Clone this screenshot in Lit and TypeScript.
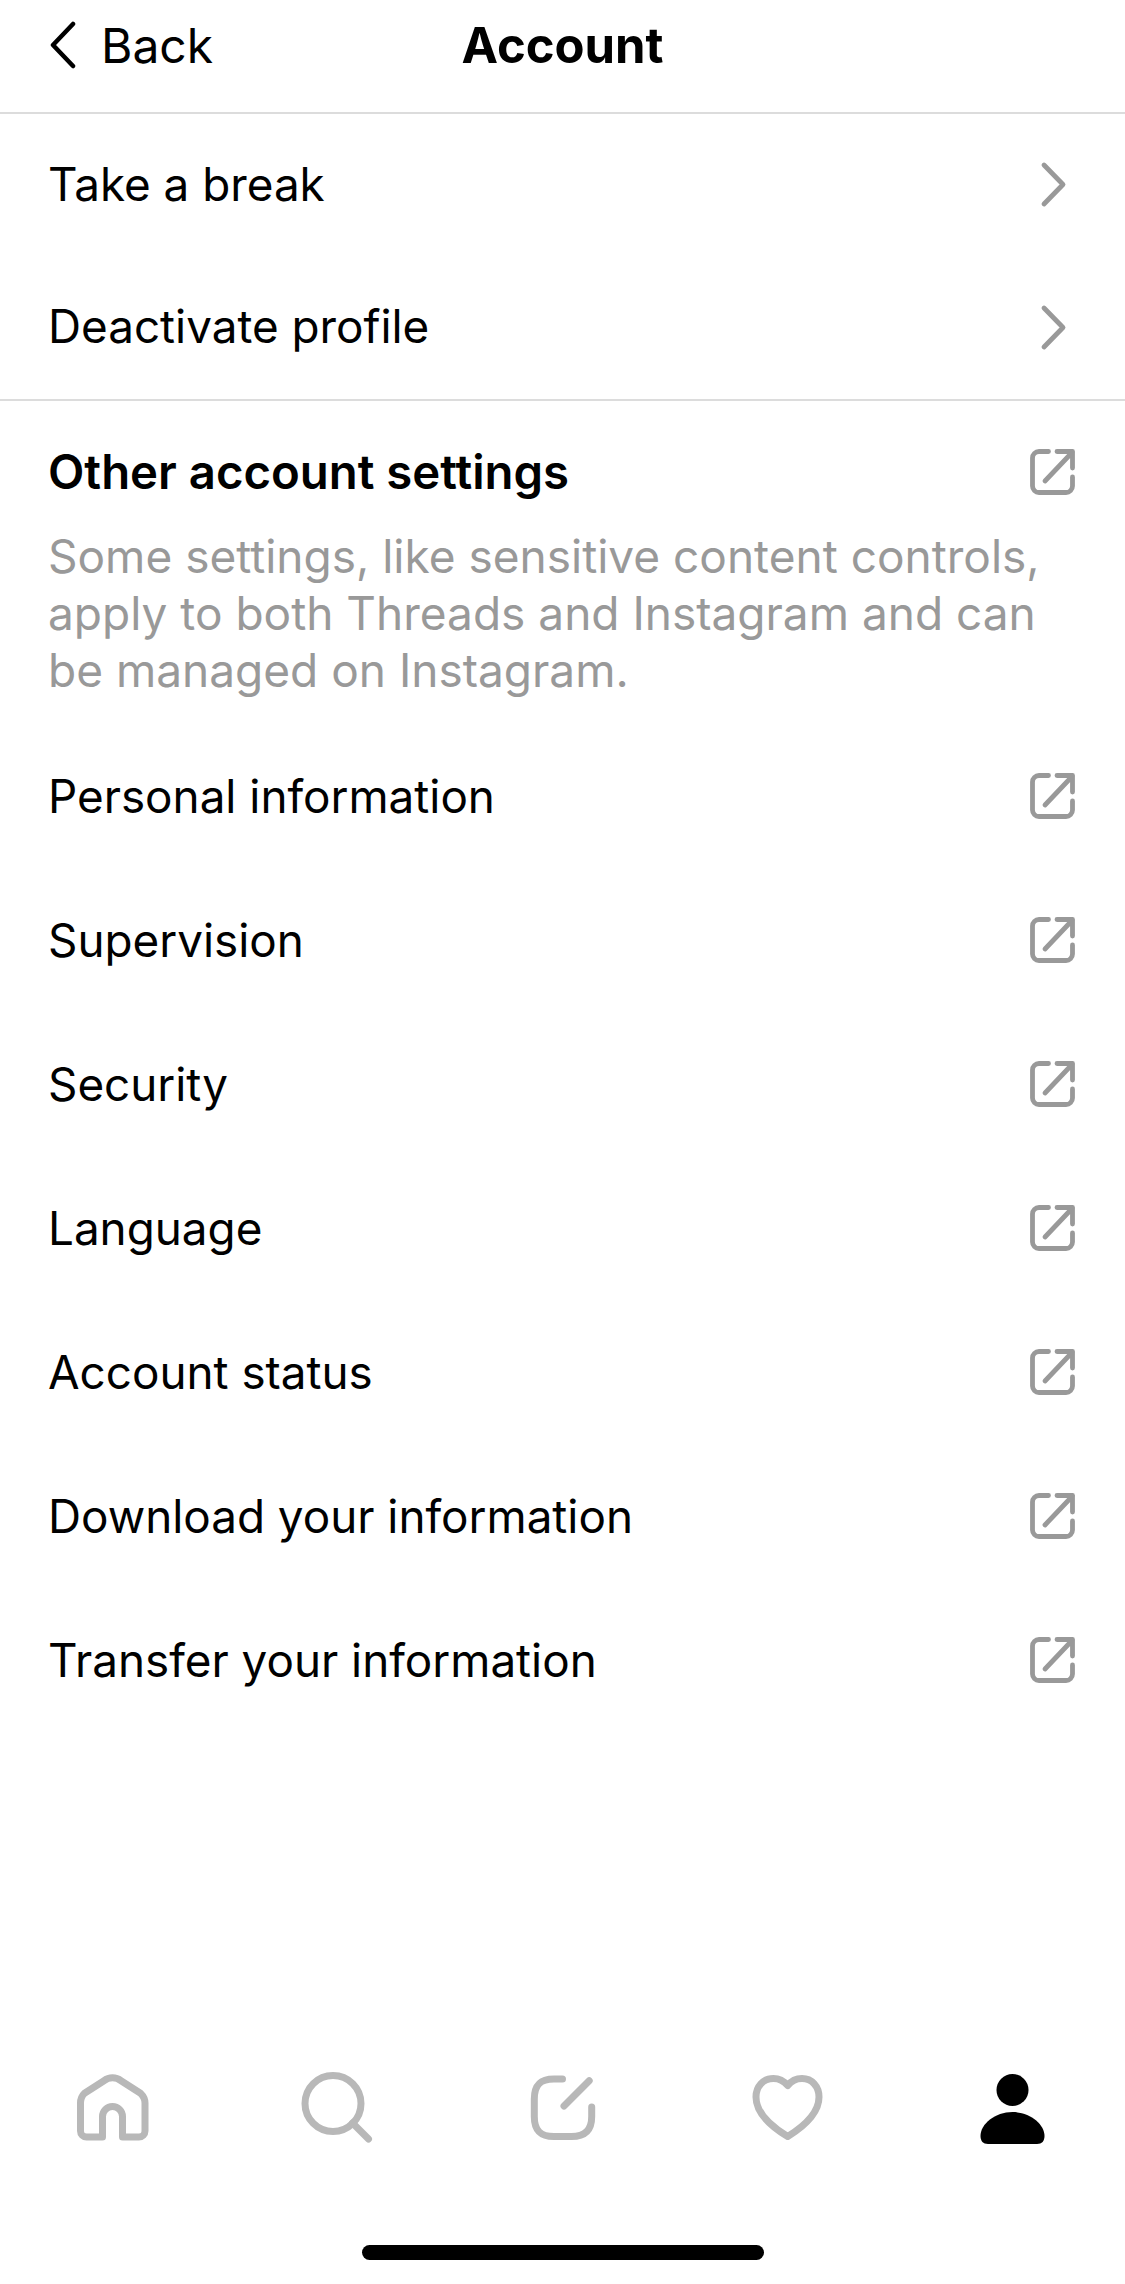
import { LitElement, html, css, svg } from 'lit';
import { customElement } from 'lit/decorators.js';

const externalIcon = html`<svg class="row-icon" width="48" height="48" viewBox="0 0 48 48" fill="none" stroke="#999" stroke-width="4.8" stroke-linecap="round" stroke-linejoin="round">
  <path d="M19.5 3.5H10a6.5 6.5 0 0 0 -6.5 6.5V38a6.5 6.5 0 0 0 6.5 6.5H37a6.5 6.5 0 0 0 6.5 -6.5V29" />
  <path d="M16 33L43.5 4M28 3.5H43.5V20" />
</svg>`;

const chevronIcon = html`<svg class="row-icon" width="48" height="48" viewBox="0 0 48 48" fill="none" stroke="#999" stroke-width="4.8" stroke-linecap="round" stroke-linejoin="round">
  <path d="M15 5 L34 24.5 L15 44" />
</svg>`;

const navIcons = [
  svg`<path d="M29.5 46.5a10 10 0 0 1 20 0V67H66a6 6 0 0 0 6-6V33c0-4-1.6-7-4.5-9.8L48 10.7c-5-4-12-4-17 0L11.5 23.2C8.6 26 7.5 29 7.5 33V61a6 6 0 0 0 6 6H29.5Z" />`,
  svg`<circle cx="35" cy="33.5" r="28" /><path d="M54.5 53 L70.5 69" />`,
  svg`<path d="M39.5 9H31C17 9 11.3 15 11.3 29V46.5C11.3 60 17 66.5 31 66.5H48.5C62 66.5 68.7 60 68.7 46.5V37M41 36L66.2 10.7" />`,
  svg`<path d="M39.7 15.5C35 10 30 8.5 25.5 8.5C15 8.5 8 16.5 8 27C8 43 24 57 39.7 66.5C55 57 71 43 71 27C71 16.5 64 8.5 54 8.5C49 8.5 44 10 39.7 15.5Z" />`,
  svg`<circle cx="39.5" cy="20" r="16" fill="#000" stroke="none" /><path fill="#000" stroke="none" d="M39.5 42C22 42 7.5 54 7.5 66C7.5 71 10 74 15 74H64C69 74 71.5 71 71.5 66C71.5 54 57 42 39.5 42Z" />`,
];

const outerLinks = [
  'Personal information',
  'Supervision',
  'Security',
  'Language',
  'Account status',
  'Download your information',
  'Transfer your information',
];

@customElement('app-root')
export class AppRoot extends LitElement {
  static styles = css`
    :host {
      display: flex;
      flex-direction: column;
      height: 2284px;
      background: #fff;
      color: #000;
      font-family: 'Inter', 'Liberation Sans', sans-serif;
      font-size: 45.8px;
    }

    .header {
      display: grid;
      grid-template-columns: 1fr auto 1fr;
      align-items: center;
      height: 114px;
      box-sizing: border-box;
      padding: 0 48px 22px;
      border-bottom: 2px solid #dcdcdc;
      font-size: 48px;
    }

    .back {
      display: flex;
      align-items: center;
      gap: 25px;
    }

    .title {
      font-weight: 700;
      font-size: 49px;
    }

    .section {
      border-bottom: 2px solid #dcdcdc;
    }

    .row {
      display: flex;
      align-items: center;
      justify-content: space-between;
      height: 144px;
      box-sizing: border-box;
      padding: 0 48px 2px;
    }

    .section .row:first-child {
      height: 142px;
    }

    .section .row:last-child {
      height: 143px;
    }

    .section + .row {
      height: 143px;
    }

    .row-icon {
      display: block;
    }

    .heading {
      font-weight: 600;
      font-size: 47.3px;
    }

    .note {
      margin: -16px 0 26px;
      padding: 0 48px;
      color: #999;
      line-height: 57px;
      font-size: 46px;
    }

    .nav {
      display: grid;
      grid-template-columns: repeat(5, 225px);
      margin-top: auto;
    }

    .nav-item {
      display: flex;
      justify-content: center;
    }

    .nav-item svg {
      fill: none;
      stroke: #b8b8b8;
      stroke-width: 7;
      stroke-linecap: round;
      stroke-linejoin: round;
    }

    .indicator {
      align-self: center;
      width: 402px;
      height: 15px;
      margin: 95px 0 24px;
      border-radius: 8px;
      background: #000;
    }
  `;

  render() {
    return html`
      <div class="header">
        <div class="back">
          <svg width="28" height="48" viewBox="0 0 28 48" fill="none" stroke="#000" stroke-width="4.5" stroke-linecap="round" stroke-linejoin="round">
            <path d="M25 3 L5 24 L25 45" />
          </svg>
          <span>Back</span>
        </div>
        <div class="title">Account</div>
      </div>

      <div class="section">
        <div class="row"><span>Take a break</span>${chevronIcon}</div>
        <div class="row"><span>Deactivate profile</span>${chevronIcon}</div>
      </div>

      <div class="row"><span class="heading">Other account settings</span>${externalIcon}</div>
      <p class="note">Some settings, like sensitive content controls, apply to both Threads and Instagram and can be managed on Instagram.</p>

      ${outerLinks.map((label) => html`<div class="row"><span>${label}</span>${externalIcon}</div>`)}

      <div class="nav">
        ${navIcons.map((icon) => html`<div class="nav-item"><svg width="80" height="80" viewBox="0 0 80 80">${icon}</svg></div>`)}
      </div>
      <div class="indicator"></div>
    `;
  }
}

declare global {
  interface HTMLElementTagNameMap {
    'app-root': AppRoot;
  }
}
